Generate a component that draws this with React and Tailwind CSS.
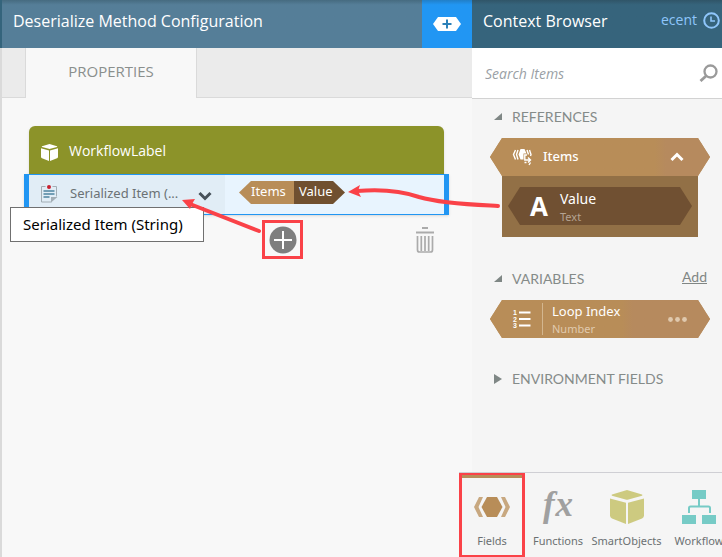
import React from "react";

const HEX =
  "[clip-path:polygon(12px_0,calc(100%_-_12px)_0,100%_50%,calc(100%_-_12px)_100%,12px_100%,0_50%)]";

function CubeIcon({ className }) {
  return (
    <svg viewBox="0 0 34 34" className={className} fill="currentColor" aria-hidden="true">
      <path d="M17 0 L32 4.5 Q33 5 32 5.8 L18.5 9.6 Q17 10 15.500 9.600 L2 5.800 Q1 5 2 4.500Z" />
      <path d="M0 8.500 L16 12.800 V34 L2 28.500 Q0 27.500 0 25.500Z" />
      <path d="M34 8.500 L18 12.800 V34 L32 28.500 Q34 27.500 34 25.500Z" />
    </svg>
  );
}

function NoteIcon() {
  return (
    <svg viewBox="0 0 18 18" className="h-[18px] w-[18px]" fill="none" aria-hidden="true">
      <path d="M5.500 1.500H1.500V17H11.500M12.500 1.500H16.500V11.500" stroke="#a3aeb5" />
      <path d="M11 17.500V12H17.500Z" fill="#a3aeb5" />
      <path d="M3.500 6H14.500M3.500 9H14.500M3.500 12H9.500" stroke="#4d84a0" strokeWidth="1.300" />
      <circle cx="9" cy="2" r="2" fill="#c8202f" />
    </svg>
  );
}

function SectionTitle({ open, children }) {
  return (
    <h2 className="flex h-6 items-center font-['Lato',sans-serif] text-sm text-[#858b89]">
      <button type="button" className="flex items-center whitespace-nowrap">
        <svg viewBox="0 0 8 10" className="mr-[10px] h-[10px] w-2" fill="#7f8785" aria-hidden="true">
          {open ? <path d="M8 1V8H0Z" /> : <path d="M0 0L8 5L0 10Z" />}
        </svg>
        {children}
      </button>
    </h2>
  );
}

function NavItem({ label, width, children }) {
  return (
    <button type="button" className={`flex shrink-0 flex-col items-center ${width}`}>
      <span className="mt-[15px] flex h-[38px] items-center justify-center">{children}</span>
      <span className="mt-[5px] whitespace-nowrap text-[11px] leading-5 text-[#6b7072]">{label}</span>
    </button>
  );
}

export default function App() {
  return (
    <div className="relative flex min-h-screen overflow-hidden bg-[#f8f8f8] font-['Noto_Sans',sans-serif] text-sm">
      <main className="flex min-w-0 flex-1 flex-col border-l-2 border-[#dadada]">
        <header className="-ml-[2px] flex h-12 items-stretch border-l-2 border-[#34647c] bg-[#557e98] bg-linear-to-b from-[#466b80] to-[#557e98] to-10%">
          <h1 className="min-w-0 flex-1 truncate pl-[11px] font-['Open_Sans',sans-serif] text-base leading-[42px] text-white">
            Deserialize Method Configuration
          </h1>
          <button
            type="button"
            aria-label="Toggle context browser"
            className="flex w-[50px] items-center justify-center bg-[#2196f3] bg-linear-to-b from-[#217fc8] to-[#2196f3] to-10%"
          >
            <svg viewBox="0 0 28 14" className="h-[14px] w-7" aria-hidden="true">
              <path d="M5 0H23L28 7L23 14H5L0 7Z" fill="#fff" />
              <path d="M14 2.500V11.500M9.500 7H18.500" stroke="#2b80b8" strokeWidth="2" />
            </svg>
          </button>
        </header>

        <div className="flex h-[50px] font-['Open_Sans',sans-serif] text-[#8a8f8d]">
          <div className="w-6 border-r border-b border-[#dadada] bg-[#ebebeb]" />
          <button type="button" className="w-[170px] pb-[2px] text-[15px]">
            PROPERTIES
          </button>
          <div className="flex-1 border-b border-l border-[#dadada] bg-[#ebebeb]" />
        </div>

        <section className="mt-7 mr-[23px] ml-[22px]">
          <div className="mx-[5px] flex h-12 items-center gap-[11px] rounded-t-md bg-[#8c9329] pl-3 font-['Open_Sans',sans-serif] text-white shadow">
            <CubeIcon className="mt-1 h-[17px] w-[17px]" />
            <span className="pt-[2px]">WorkflowLabel</span>
          </div>
          <div className="flex h-[41px] border-x-[5px] border-[#2196f3] shadow-sm">
            <div className="flex min-w-0 flex-1 border-y border-[#2196f3] bg-[#e8f4fe]">
              <div className="flex w-[196px] items-center bg-[#e1edf6] pb-[2px] pl-[11px] text-[#6b7275]">
                <NoteIcon />
                <span className="ml-3 w-[118px] whitespace-nowrap text-[13px]">Serialized Item (...</span>
                <button type="button" aria-label="Choose property" className="mt-1 ml-[10px]">
                  <svg viewBox="0 0 14 10" className="h-[10px] w-[14px]" fill="none" aria-hidden="true">
                    <path d="M1.500 2L7 7.500L12.500 2" stroke="#47525a" strokeWidth="3" />
                  </svg>
                </button>
              </div>
              <div className="flex items-start pt-[6px] pl-[14px]">
                <div className="flex h-[23px] text-[13px] leading-[21px] text-white [clip-path:polygon(12px_0,calc(100%_-_12px)_0,100%_50%,calc(100%_-_12px)_100%,12px_100%,0_50%)]">
                  <span className="w-[55px] bg-[#b88d58] pl-3">Items</span>
                  <span className="w-[51px] bg-[#705030] pl-[5px]">Value</span>
                </div>
              </div>
            </div>
          </div>
          <div className="mr-[15px] flex items-center justify-between pt-[5px] pl-[238px]">
            <button
              type="button"
              aria-label="Add mapping"
              className="flex h-[39px] w-[41px] items-center justify-center border-3 border-[#fa4248]"
            >
              <svg viewBox="0 0 28 28" className="h-7 w-7 shrink-0" aria-hidden="true">
                <circle cx="14" cy="14" r="13.500" fill="#7e7e7e" />
                <path d="M14 5V23M5 14H23" stroke="#fff" strokeWidth="2" />
              </svg>
            </button>
            <button type="button" aria-label="Delete mapping">
              <svg viewBox="0 0 18 26" className="h-[26px] w-[18px]" fill="none" stroke="#ababab" aria-hidden="true">
                <path d="M6 1H12M0 5.500H18" strokeWidth="2" />
                <path
                  d="M1.500 9V23Q1.500 25 3.500 25H14.500Q16.500 25 16.500 23V9M5.300 9V24M9 9V24M12.700 9V24"
                  strokeWidth="1.700"
                />
              </svg>
            </button>
          </div>
        </section>
      </main>

      <aside className="flex w-[250px] shrink-0 flex-col bg-[#f5f5f5]">
        <header className="flex h-12 items-start bg-[#36647c] bg-linear-to-b from-[#305568] to-[#36647c] to-10% pl-[11px] font-['Open_Sans',sans-serif] text-base">
          <h1 className="flex-1 leading-[42px] whitespace-nowrap text-white">Context Browser</h1>
          <button type="button" className="flex items-center gap-[6px] pr-[2px] leading-[40px] text-[#8fc6fb]">
            <span className="text-sm leading-[40px]">ecent</span>
            <svg viewBox="0 0 17 17" className="h-[17px] w-[17px]" fill="none" stroke="currentColor" aria-hidden="true">
              <circle cx="8.500" cy="8.500" r="7.300" strokeWidth="2" />
              <path d="M8 4.500V9H12" strokeWidth="1.600" />
            </svg>
          </button>
        </header>

        <label className="flex h-[51px] items-center border-b border-[#d2d2d2] bg-white pr-1 pl-[13px]">
          <input
            type="search"
            aria-label="Search Items"
            placeholder="Search Items"
            className="h-10 min-w-0 flex-1 bg-transparent font-['Open_Sans',sans-serif] text-sm italic outline-none placeholder:text-[#9a9fa5]"
          />
          <svg viewBox="0 0 19 18" className="h-[18px] w-[19px]" fill="none" stroke="#9a9a9a" aria-hidden="true">
            <circle cx="11.500" cy="7.500" r="6" strokeWidth="2.300" />
            <path d="M7 12L1.500 17" strokeWidth="2.800" />
          </svg>
        </label>

        <div className="flex-1 pr-3 pl-[18px]">
          <section className="pt-[6px]">
            <div className="pl-1">
              <SectionTitle open>REFERENCES</SectionTitle>
            </div>
            <div className={`mt-[9px] flex h-[38px] items-center bg-[#b88d58] bg-linear-to-r from-[#b88d58] from-75% to-[#b68a5e] to-80% pr-[26px] pl-[22px] text-white ${HEX}`}>
              <svg viewBox="0 0 20 18" className="h-[18px] w-5" fill="none" stroke="#fff" aria-hidden="true">
                <path d="M3.500 2L1.500 6.500L3.500 11.500M6 2L4.500 6.500L6 11.500M15 2L16.500 6.500M17.500 2L19 6.500L18.500 8" strokeWidth="1.400" />
                <path d="M8.500 1H12.500L14.500 5.500H11.500V11.500H8.500L6.500 6.500Z" fill="#fff" stroke="none" />
                <path d="M15 7H12.800V12H18M16 9.500L18.500 12L16 14.500M12.500 14.500H14.500M17 17L18.500 14.500" strokeWidth="1.400" />
              </svg>
              <span className="ml-[11px] flex-1 pb-[2px] text-[13px] font-medium">Items</span>
              <button type="button" aria-label="Collapse Items">
                <svg viewBox="0 0 14 10" className="h-[10px] w-[14px]" fill="none" aria-hidden="true">
                  <path d="M1.500 8L7 2.500L12.500 8" stroke="#fff" strokeWidth="3" />
                </svg>
              </button>
            </div>
            <div className="mx-3 h-[61px] bg-[#927046] px-[6px] pt-[11px]">
              <div className={`flex h-[38px] items-center bg-[#705032] pl-[22px] ${HEX}`}>
                <span className="w-[30px] font-['Open_Sans',sans-serif] text-[26px] leading-8 font-bold text-white">A</span>
                <span className="flex flex-col pt-[3px]">
                  <span className="text-sm leading-[18px] text-white">Value</span>
                  <span className="text-[11px] leading-[18px] text-[#b5a493]">Text</span>
                </span>
              </div>
            </div>
          </section>

          <section className="pt-[30px]">
            <div className="flex h-6 items-center justify-between pr-[3px] pl-1">
              <SectionTitle open>VARIABLES</SectionTitle>
              <a href="#add" className="pb-1 font-['Lato',sans-serif] text-sm text-[#808684] underline">
                Add
              </a>
            </div>
            <div className={`mt-[9px] flex h-[38px] items-center bg-[#b88d58] bg-linear-to-r from-[#b88d58] from-60% to-[#b68a5e] to-65% pr-[23px] pl-[22px] ${HEX}`}>
              <svg viewBox="0 0 19 20" className="h-5 w-[19px]" aria-hidden="true">
                <path d="M7 3.500H18.500M7 10H18.500M7 16.500H18.500" stroke="#fff" strokeWidth="2.200" />
                <g fill="#fff" fontFamily="Liberation Sans, sans-serif" fontWeight="bold" fontSize="7">
                  <text x="1" y="6">1</text>
                  <text x="1" y="12.500">2</text>
                  <text x="1" y="19">3</text>
                </g>
              </svg>
              <span className="mr-[9px] ml-[11px] h-8 w-px bg-[#d3b68f]" />
              <span className="flex flex-1 flex-col whitespace-nowrap pt-[2px]">
                <span className="text-[13px] leading-[17px] text-white">Loop Index</span>
                <span className="text-[11px] leading-[17px] text-[#e0caae]">Number</span>
              </span>
              <button type="button" aria-label="Loop Index options">
                <svg viewBox="0 0 19 5" className="h-[5px] w-[19px]" fill="#e0c9ae" aria-hidden="true">
                  <circle cx="2.500" cy="2.500" r="2.400" />
                  <circle cx="9.500" cy="2.500" r="2.400" />
                  <circle cx="16.500" cy="2.500" r="2.400" />
                </svg>
              </button>
            </div>
          </section>

          <section className="pt-[29px] pl-1">
            <SectionTitle>ENVIRONMENT FIELDS</SectionTitle>
          </section>
        </div>

        <nav className="-ml-[13px] flex h-[85px] overflow-hidden border-t border-[#cfcfd4] bg-[#f5f5f5]">
          <div className="-mb-px flex shrink-0 border-3 border-[#fa4248]">
            <div className="-mt-px flex border-t-3 border-[#b88d58]">
              <button type="button" className="flex w-[60px] flex-col items-center">
                <span className="mt-[10px] flex h-[38px] items-center">
                  <svg viewBox="0 0 36 20" className="h-5 w-9" fill="#b88d58" aria-hidden="true">
                    <path d="M13 0H23L28.500 10L23 20H13L7.500 10Z" />
                    <path d="M5 0H9L4.500 10L9 20H5L0 10ZM31 0H27L31.500 10L27 20H31L36 10Z" opacity="0.750" />
                  </svg>
                </span>
                <span className="mt-[5px] text-[11px] leading-5 text-[#6b7072]">Fields</span>
              </button>
            </div>
          </div>
          <NavItem label="Functions" width="w-[66px]">
            <span
              aria-hidden="true"
              className="-mt-1 flex gap-px font-['Liberation_Serif',serif] text-[35px] leading-[38px] font-bold text-[#a0a0a0] italic"
            >
              <span>f</span>
              <span>x</span>
            </span>
          </NavItem>
          <NavItem label="SmartObjects" width="w-[71px]">
            <CubeIcon className="h-[34px] w-[34px] text-[#cdca80]" />
          </NavItem>
          <NavItem label="Workflow" width="w-[74px]">
            <svg viewBox="0 0 34 34" className="h-[34px] w-[34px]" fill="#76cbc6" aria-hidden="true">
              <path d="M10 0H24V9H10ZM0 25H14V34H0ZM20 25H34V34H20Z" />
              <path d="M17 9V16M7 23V18Q7 16.500 8.500 16.500H26.500Q28 16.500 28 18V23" fill="none" stroke="#76cbc6" strokeWidth="2" />
            </svg>
          </NavItem>
        </nav>
      </aside>

      <div
        role="tooltip"
        className="absolute top-[207px] left-[10px] flex h-[35px] w-[194px] items-center border border-[#707070] bg-white pl-3 text-[15px] whitespace-nowrap text-black"
      >
        Serialized Item (String)
      </div>

      <svg
        viewBox="0 0 722 557"
        className="pointer-events-none absolute top-0 left-0 h-[557px] w-[722px]"
        fill="none"
        stroke="#fa4248"
        strokeWidth="4"
        strokeLinecap="round"
        aria-hidden="true"
      >
        <path d="M259 231L190 204" />
        <path d="M182 200L195 199L192 204L190 209Z" fill="#fa4248" stroke="none" />
        <path d="M498 206C480 205 443 204 419 197C399 190 380 189 357 191" />
        <path d="M348 192L360 185L358 191L361 197Z" fill="#fa4248" stroke="none" />
      </svg>
    </div>
  );
}
